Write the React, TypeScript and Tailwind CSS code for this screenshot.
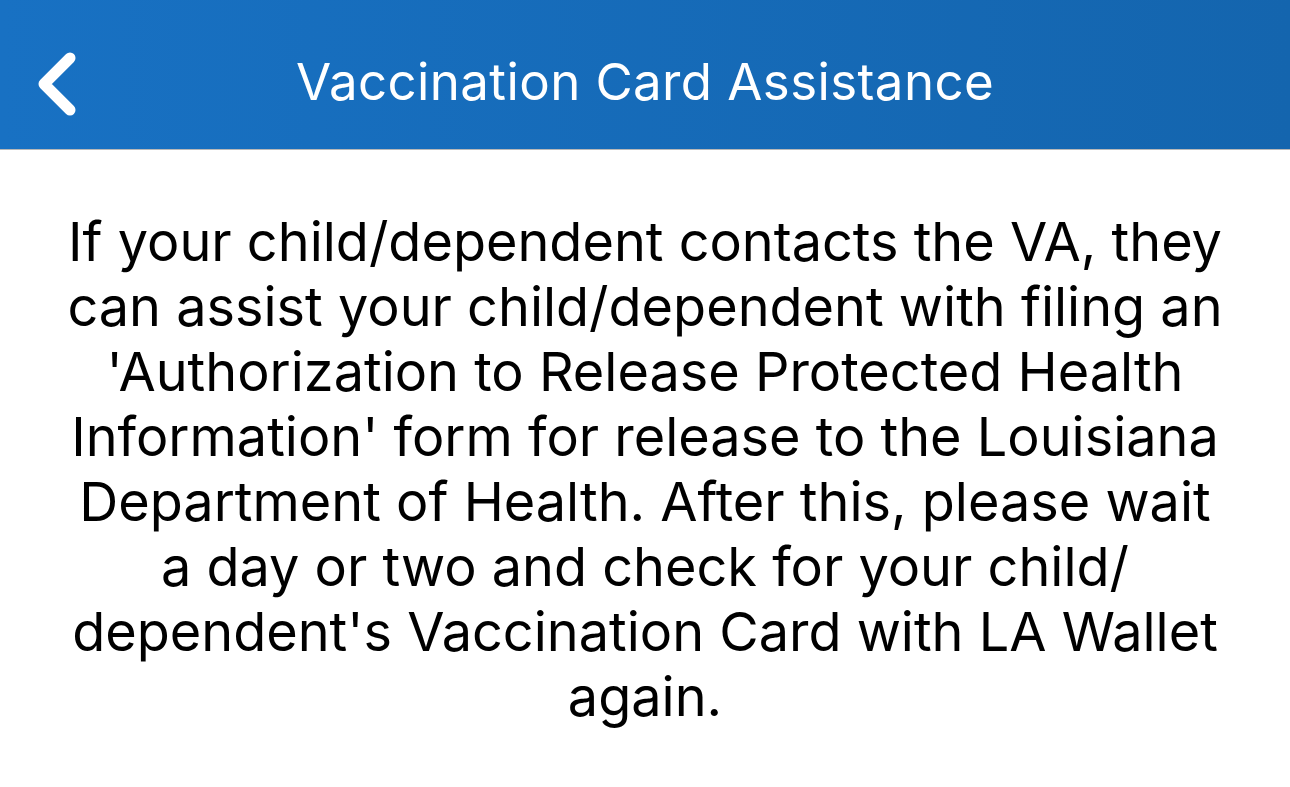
import React from 'react';

const lines = [
    'If your child/dependent contacts the VA, they',
    'can assist your child/dependent with filing an',
    "'Authorization to Release Protected Health",
    "Information' form for release to the Louisiana",
    'Department of Health. After this, please wait',
    'a day or two and check for your child/',
    "dependent's Vaccination Card with LA Wallet",
    'again.',
];

const BackChevron = () => (
    <svg width="40" height="64" viewBox="0 0 40 64" fill="none">
        <path d="M32 6 L6 32 L32 58" stroke="white" strokeWidth="11" strokeLinecap="round" strokeLinejoin="round" />
    </svg>
);

export default function App() {
    return (
        <div className="min-h-screen bg-white font-['Inter',sans-serif]">
            {/* Top navigation bar */}
            <header className="relative h-[150px] bg-gradient-to-r from-[#1871c3] to-[#1465ae] border-b border-[#b8b8b8] flex items-center justify-center pt-[16px]">
                <button className="absolute left-[38px] top-[52px]" aria-label="Back">
                    <BackChevron />
                </button>
                <h1 className="text-white text-[51px] tracking-[0.4px]">Vaccination Card Assistance</h1>
            </header>

            {/* Explanation text */}
            <main className="pt-[59px] flex justify-center">
                <p className="text-black text-[54px] leading-[65px] text-center">
                    {lines.map((line, i) => (
                        <React.Fragment key={i}>
                            {line}
                            {i < lines.length - 1 && <br />}
                        </React.Fragment>
                    ))}
                </p>
            </main>
        </div>
    );
}
